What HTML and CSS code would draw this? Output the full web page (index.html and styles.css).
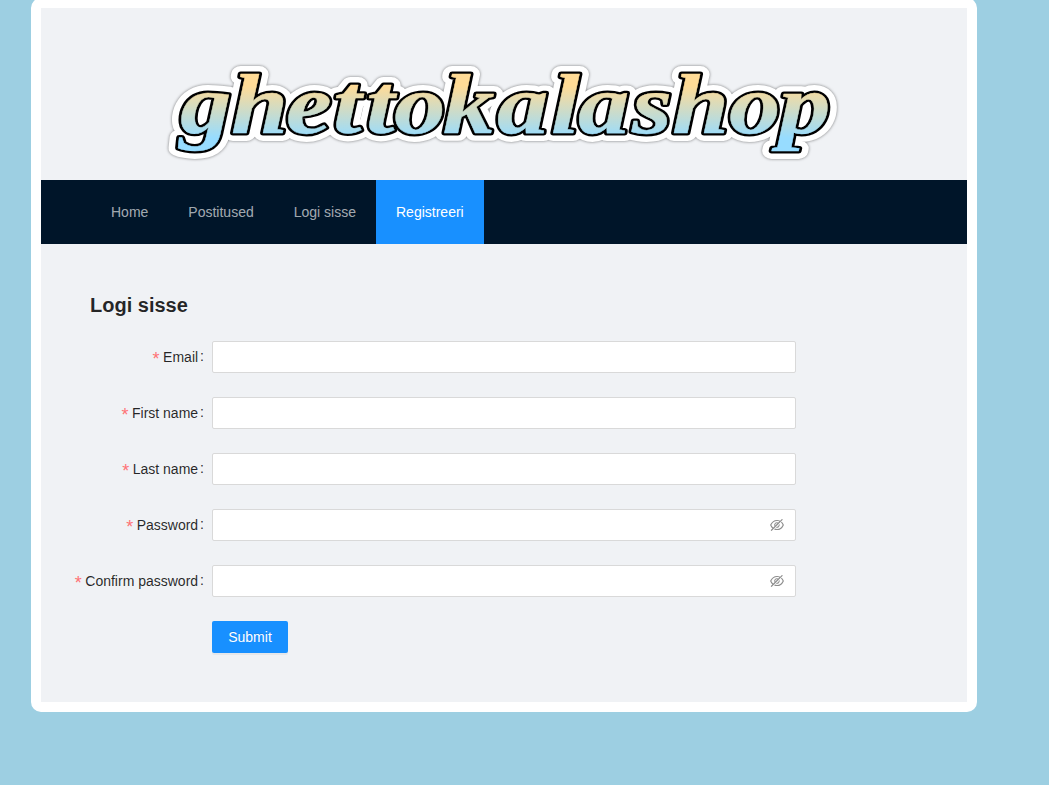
FILE: index.html
```html
<!DOCTYPE html>
<html lang="et">
<head>
<meta charset="utf-8">
<title>ghettokalashop</title>
<link rel="stylesheet" href="styles.css">
</head>
<body>
<div class="page">
  <header class="banner">
    <svg class="logo" width="700" height="130" viewBox="150 50 700 130" role="img" aria-label="ghettokalashop">
      <defs>
        <linearGradient id="sky" gradientUnits="userSpaceOnUse" x1="0" y1="-57" x2="0" y2="6">
          <stop offset="0" stop-color="#ffdb96"/>
          <stop offset="1" stop-color="#97dcff"/>
        </linearGradient>
      </defs>
      <g transform="translate(-1 133) scale(1 .83)">
        <text class="logo-text logo-halo" x="181 232 287 334 367 395 444 498 552 579 633 673 730 780">ghettokalashop</text>
        <text class="logo-text logo-edge" x="181 232 287 334 367 395 444 498 552 579 633 673 730 780">ghettokalashop</text>
        <text class="logo-text logo-face" x="181 232 287 334 367 395 444 498 552 579 633 673 730 780">ghettokalashop</text>
      </g>
    </svg>
  </header>
  <nav class="menu">
    <a class="menu-item">Home</a>
    <a class="menu-item">Postitused</a>
    <a class="menu-item">Logi sisse</a>
    <a class="menu-item active">Registreeri</a>
  </nav>
  <main class="content">
    <h1 class="title">Logi sisse</h1>
    <form class="form">
      <div class="row"><label class="label required" for="email">Email</label><div class="field"><input class="input" id="email"></div></div>
      <div class="row"><label class="label required" for="first">First name</label><div class="field"><input class="input" id="first"></div></div>
      <div class="row"><label class="label required" for="last">Last name</label><div class="field"><input class="input" id="last"></div></div>
      <div class="row"><label class="label required" for="pass">Password</label><div class="field"><input class="input" id="pass" type="password"><svg class="eye" viewBox="64 64 896 896"><use href="#eye-off"/></svg></div></div>
      <div class="row"><label class="label required" for="confirm">Confirm password</label><div class="field"><input class="input" id="confirm" type="password"><svg class="eye" viewBox="64 64 896 896"><g id="eye-off"><path d="M942.2 486.2Q889.47 375.11 816.7 305l-50.88 50.88C807.31 395.53 843.45 447.4 874.7 512 791.5 684.2 673.4 766 512 766q-72.67 0-133.87-22.38L323 798.75Q408 838 512 838q288.3 0 430.2-300.3a60.29 60.29 0 000-51.5zm-63.57-320.64L836 122.88a8 8 0 00-11.32 0L715.31 232.2Q624.86 186 512 186q-288.3 0-430.2 300.3a60.3 60.3 0 000 51.5q56.69 119.4 136.5 191.41L112.48 835a8 8 0 000 11.31L155.17 889a8 8 0 0011.31 0l712.15-712.12a8 8 0 000-11.32zM149.3 512C232.6 339.8 350.7 258 512 258c54.54 0 104.13 9.36 149.12 28.39l-70.3 70.3a176 176 0 00-238.13 238.13l-83.42 83.42C223.1 637.49 183.3 582.28 149.3 512zm246.7 0a112.11 112.11 0 01146.2-106.69L401.31 546.2A112 112 0 01396 512z"/><path d="M508 624c-3.46 0-6.87-.16-10.25-.47l-52.82 52.82a176.09 176.09 0 00227.42-227.42l-52.82 52.82c.31 3.38.47 6.79.47 10.25a111.94 111.94 0 01-112 112z"/></g></svg></div></div>
      <button class="submit" type="button">Submit</button>
    </form>
  </main>
</div>
</body>
</html>
```
FILE: styles.css
```css
* { box-sizing: border-box; }
body {
  margin: 0;
  display: flow-root;
  min-height: 785px;
  background: #9dcfe2;
  font: 14px/22px "Liberation Sans", Arial, sans-serif;
  color: rgba(0, 0, 0, .85);
}
.page {
  width: 946px;
  height: 714px;
  margin: -2px 0 0 31px;
  border: 10px solid #fff;
  border-radius: 10px;
  background: #f0f2f5;
}
.banner { height: 172px; padding: 42px 0 0 109px; }
.logo { display: block; overflow: visible; filter: drop-shadow(0 0 1.5px rgba(0, 0, 0, .5)); }
.logo-text {
  font: italic bold 103px "Liberation Serif", "Times New Roman", serif;
  stroke-linejoin: round;
}
.logo-halo { fill: #fff; stroke: #fff; stroke-width: 19px; }
.logo-edge { fill: #000; stroke: #000; stroke-width: 6px; }
.logo-face { fill: url(#sky); stroke: url(#sky); stroke-width: .5px; }
.menu {
  display: flex;
  height: 64px;
  padding-left: 50px;
  background: #001529;
  line-height: 64px;
}
.menu-item { padding: 0 20px; color: rgba(255, 255, 255, .65); }
.menu-item.active { background: #1890ff; color: #fff; }
.content { padding: 47px 0 0 49px; }
.title { margin: 0; font-size: 20px; line-height: 28px; font-weight: 600; }
.form { display: grid; gap: 24px; margin: 22px 0 0 -49px; }
.row { display: grid; grid-template-columns: 171px 584px; }
.label {
  display: flex;
  align-items: center;
  justify-content: flex-end;
  height: 32px;
}
.label::after { content: ":"; margin: 0 8px 2px 2px; }
.required::before {
  content: "*";
  margin: 3px 3.5px 0 0;
  color: #ff7375;
  font: 18px/1 "Liberation Sans", sans-serif;
}
.field { position: relative; }
.input {
  display: block;
  width: 100%;
  height: 32px;
  padding: 4px 11px;
  border: 1px solid #d9d9d9;
  border-radius: 2px;
  background: #fff;
  font: inherit;
}
.eye {
  position: absolute;
  top: 9px;
  right: 12px;
  width: 14px;
  height: 14px;
  fill: rgba(0, 0, 0, .45);
}
.submit {
  width: 76px;
  height: 32px;
  margin-left: 171px;
  padding: 0;
  border: 0;
  border-radius: 2px;
  background: #1890ff;
  color: #fff;
  font: inherit;
  text-shadow: 0 -1px 0 rgba(0, 0, 0, .12);
  box-shadow: 0 2px 0 rgba(0, 0, 0, .045);
}
```
